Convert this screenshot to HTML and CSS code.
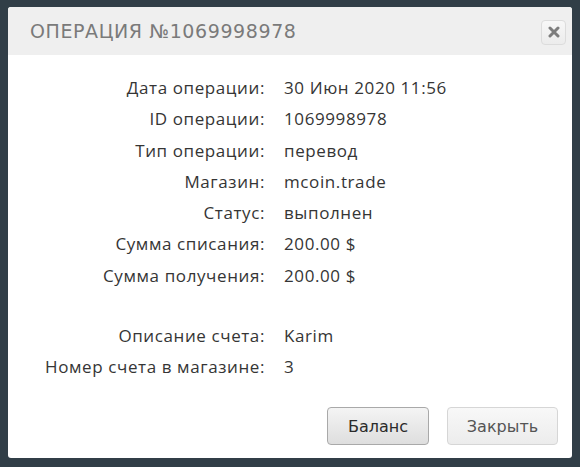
FILE: index.html
```html
<!DOCTYPE html>
<html lang="ru">
<head>
<meta charset="utf-8">
<link rel="stylesheet" href="styles.css">
</head>
<body>
<div class="modal">
  <div class="modal-head">
    <h1 class="title">Операция №1069998978</h1>
    <button class="close" aria-label="close">
      <svg width="12" height="12" viewBox="0 0 12 12"><path d="M2 2 L10 10 M10 2 L2 10" stroke="#7d7d7d" stroke-width="3" stroke-linecap="round"/></svg>
    </button>
  </div>
  <div class="modal-body">
    <div class="rows">
      <div class="label">Дата операции:</div><div class="value">30 Июн 2020 11:56</div>
      <div class="label">ID операции:</div><div class="value">1069998978</div>
      <div class="label">Тип операции:</div><div class="value">перевод</div>
      <div class="label">Магазин:</div><div class="value">mcoin.trade</div>
      <div class="label">Статус:</div><div class="value">выполнен</div>
      <div class="label">Сумма списания:</div><div class="value">200.00 $</div>
      <div class="label">Сумма получения:</div><div class="value">200.00 $</div>
      <div class="spacer"></div>
      <div class="label">Описание счета:</div><div class="value">Karim</div>
      <div class="label">Номер счета в магазине:</div><div class="value">3</div>
    </div>
  </div>
  <div class="modal-foot">
    <button class="btn btn-primary">Баланс</button>
    <button class="btn btn-light">Закрыть</button>
  </div>
</div>
</body>
</html>
```
FILE: styles.css
```css
html, body {
  margin: 0;
  padding: 0;
  background: #313e47;
  width: 580px;
  height: 467px;
  overflow: hidden;
}
body {
  padding: 7px 8px 0 8px;
  box-sizing: border-box;
}
.modal {
  width: 564px;
  height: 451px;
  background: #fff;
  border-radius: 3px;
  display: flex;
  flex-direction: column;
  overflow: hidden;
}
.modal-head {
  height: 48px;
  background: #efefef;
  display: flex;
  align-items: center;
  justify-content: space-between;
  padding: 0 6px 0 22px;
}
.title {
  margin: 0;
  font-family: "DejaVu Sans", sans-serif;
  font-weight: normal;
  font-size: 19px;
  letter-spacing: 0.6px;
  text-transform: uppercase;
  color: #7a7a7a;
}
.close {
  width: 25px;
  height: 25px;
  margin-top: 2px;
  padding: 0;
  border: 1px solid #dcdcdc;
  border-radius: 4px;
  background: linear-gradient(#f7f7f7, #ececec);
  display: flex;
  align-items: center;
  justify-content: center;
}
.modal-body {
  padding-top: 17px;
  flex: 1;
}
.rows {
  display: grid;
  grid-template-columns: 257px auto;
  column-gap: 19px;
  font-family: "Open Sans", sans-serif;
  font-size: 17px;
  letter-spacing: 0.6px;
  line-height: 31.3px;
  color: #353535;
}
.label {
  text-align: right;
}
.spacer {
  grid-column: 1 / 3;
  height: 29px;
}
.modal-foot {
  display: flex;
  justify-content: flex-end;
  gap: 18px;
  padding: 0 14px 13px 0;
}
.btn {
  height: 38px;
  border-radius: 4px;
  font-family: "DejaVu Sans", sans-serif;
  font-size: 16px;
  padding: 0;
}
.btn-primary {
  width: 102px;
  border: 1px solid #a9a9a9;
  background: linear-gradient(#f4f4f4, #dedede);
  color: #2b2b2b;
}
.btn-light {
  width: 111px;
  border: 1px solid #d6d6d6;
  background: linear-gradient(#f8f8f8, #ececec);
  color: #555;
}
```
